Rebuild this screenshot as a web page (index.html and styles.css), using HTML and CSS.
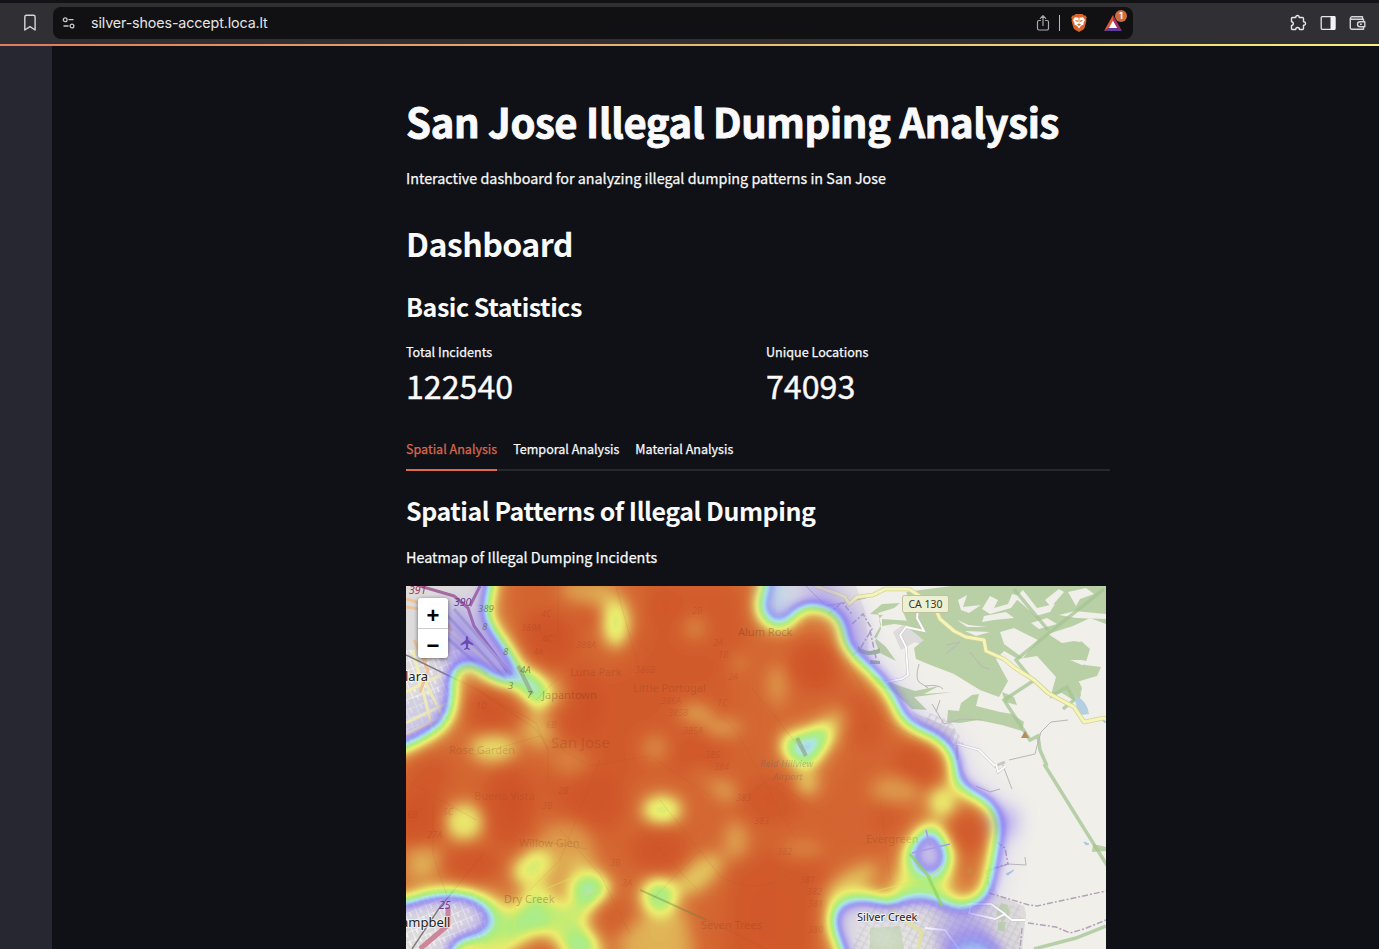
FILE: index.html
```html
<!DOCTYPE html>
<html lang="en">
<head>
<meta charset="utf-8">
<title>San Jose Illegal Dumping Analysis</title>
<link rel="stylesheet" href="styles.css">
</head>
<body>
<header class="toolbar">
  <svg class="bookmark" width="14" height="18" viewBox="0 0 14 18" fill="none" stroke="#d6d5d8" stroke-width="1.4" stroke-linejoin="round"><path d="M1.8 3a1.7 1.7 0 0 1 1.7-1.7h6.9A1.7 1.7 0 0 1 12.100 3v13L7 12.600 1.800 16z"/></svg>
  <div class="address">
    <svg width="14" height="14" viewBox="0 0 14 14" fill="none" stroke="#c9c8cb" stroke-width="1.3"><circle cx="3.200" cy="3.700" r="1.900"/><path d="M6.500 3.700h5M1.500 10h5"/><circle cx="10" cy="10" r="1.900"/></svg>
    <span class="url">silver-shoes-accept.loca.lt</span>
    <svg class="share" width="14" height="18" viewBox="0 0 14 18" fill="none" stroke="#a9a8ab" stroke-width="1.200" stroke-linecap="round" stroke-linejoin="round"><path d="M4.500 6.500H3A1.500 1.500 0 0 0 1.500 8v6.500A1.500 1.500 0 0 0 3 16h8a1.500 1.500 0 0 0 1.500-1.500V8A1.500 1.500 0 0 0 11 6.500H9.500M7 11.500V1.800M4.300 4.300 7 1.600l2.700 2.700"/></svg>
    <i class="divider"></i>
    <svg class="lion" width="16" height="18" viewBox="0 0 16 18"><path d="M4.500 0h7l1.500 1.600 1.500-.1 1.300 2-.7 1.700.4 1.400-1.800 7Q13.200 15 12 15.800L8 18l-4-2.200Q2.800 15 2.300 13.600L.5 6.600l.4-1.400-.7-1.700 1.300-2 1.500.1z" fill="#d9652b"/><path d="M4 3.200 8 3.800l4-.6 2 2.800-1.500 3 .1 1.500-2.600 1.300L8 14.600l-2-2.800-2.600-1.300.1-1.500L2 6z" fill="#fff"/><path d="m3.800 6 3.200.6-.6 1.700zM12.200 6 9 6.600l.6 1.700zM6 10.200 8 9.500l2 .7-2 1.800z" fill="#d9652b"/><path d="M8 3.500v5" stroke="#d9652b" stroke-width=".8"/></svg>
    <span class="rewards">
      <svg width="18" height="16" viewBox="0 0 18 16"><path d="M9 0 0 16l5-3 4-7z" fill="#e0592f"/><path d="M9 0v6l4 7 5 3z" fill="#a0306b"/><path d="M0 16h18l-5-3.200H5z" fill="#623a99"/><path d="M9 5.500 4.800 13h8.400z" fill="#fff"/></svg>
      <b class="badge">1</b>
    </span>
  </div>
  <div class="actions">
    <svg width="18" height="18" viewBox="0 0 18 18" fill="none" stroke="#e6e5e8" stroke-width="1.400" stroke-linejoin="round"><path d="M3.500 3.500h3.300C6.500.8 10.500.8 10.200 3.500h3.300a1 1 0 0 1 1 1v3.200c2.700-.2 2.700 3.800 0 3.600v3.200a1 1 0 0 1-1 1h-3c0-2.600-3.800-2.600-3.800 0H3.500a1 1 0 0 1-1-1v-3c2.400 0 2.400-3.800 0-3.800V4.500a1 1 0 0 1 1-1z"/></svg>
    <svg width="16" height="16" viewBox="0 0 16 16"><rect x="1.200" y="1.700" width="13.600" height="12.600" rx="1" fill="none" stroke="#e6e5e8" stroke-width="1.300"/><path d="M10.500 1h4a1 1 0 0 1 1 1v12a1 1 0 0 1-1 1h-4z" fill="#f2f1f4"/></svg>
    <svg width="17" height="16" viewBox="0 0 17 16" fill="none" stroke="#d6d5d8" stroke-width="1.400" stroke-linejoin="round"><path d="M13.500 4.300V1.800H2.500a1.300 1.300 0 0 0 0 2.500h12v2.400M1.300 3v9.800a1.500 1.500 0 0 0 1.500 1.500h11.700v-2.600M15.800 6.700H11a2.500 2.500 0 0 0 0 5h4.800zM11 9.200h1.800"/></svg>
  </div>
</header>
<div class="accent"></div>
<div class="page">
  <aside class="sidebar"></aside>
  <main class="content">
    <h1>San Jose Illegal Dumping Analysis</h1>
    <p class="intro">Interactive dashboard for analyzing illegal dumping patterns in San Jose</p>
    <h2>Dashboard</h2>
    <h3>Basic Statistics</h3>
    <section class="metrics">
      <div><div class="label">Total Incidents</div><div class="value">122540</div></div>
      <div><div class="label">Unique Locations</div><div class="value">74093</div></div>
    </section>
    <nav class="tabs"><a class="active">Spatial Analysis</a><a>Temporal Analysis</a><a>Material Analysis</a></nav>
    <h3 class="patterns">Spatial Patterns of Illegal Dumping</h3>
    <p class="caption">Heatmap of Illegal Dumping Incidents</p>
    <div class="map">
      <svg class="canvas" width="700" height="363" viewBox="406 586 700 363">
        <defs>
          <filter id="heat" filterUnits="userSpaceOnUse" x="340" y="520" width="830" height="500" color-interpolation-filters="sRGB">
            <feGaussianBlur in="SourceGraphic" stdDeviation="8" result="fine"/>
            <feGaussianBlur in="SourceGraphic" stdDeviation="17" result="wide"/>
            <feComposite in="fine" in2="wide" operator="arithmetic" k1="0" k2=".66" k3=".34" k4="0"/>
            <feColorMatrix values="1 0 0 0 0  1 0 0 0 0  1 0 0 0 0  1 0 0 0 0"/>
            <feComponentTransfer>
              <feFuncR type="table" tableValues=".53 .53 .52 .50 .47 .55 .62 .62 .67 .80 .93 .91 .885 .865 .85 .835 .82 .81"/>
              <feFuncG type="table" tableValues=".44 .44 .44 .42 .50 .75 .91 .94 .94 .94 .93 .83 .70 .58 .48 .40 .34 .31"/>
              <feFuncB type="table" tableValues=".97 .97 .96 .96 .97 .98 .88 .50 .42 .38 .38 .35 .30 .25 .21 .17 .145 .13"/>
              <feFuncA type="table" tableValues="0 .12 .34 .58 .68 .73 .77 .82 .85 .87 .89 .91 .92 .93 .94 .95 .96 .97"/>
            </feComponentTransfer>
          </filter>
          <filter id="soft" x="-50%" y="-50%" width="200%" height="200%"><feGaussianBlur stdDeviation="10"/></filter>
          <pattern id="streets" width="11" height="9" patternUnits="userSpaceOnUse" patternTransform="rotate(-22)"><path d="M0 0h11M0 0v9M5 0v5" stroke="#fff" stroke-width="1.200" fill="none"/></pattern>
          <pattern id="lanes" width="7" height="6" patternUnits="userSpaceOnUse" patternTransform="rotate(28)"><path d="M0 1h6M2 1v5" stroke="#c4c3c3" stroke-width=".8" fill="none"/></pattern>
        </defs>
        <rect x="406" y="586" width="700" height="363" fill="#f0efea"/>
        <!-- built-up areas -->
        <g fill="#dddbdb">
          <path d="M406 586h370v363H406z"/>
          <path d="M776 586h80l10 28 4 60 30 40 30 16 30 34 10 20 20 90 10 26-6 49H776z" opacity=".7"/>
          <path d="M893 632l14-10 20-4 8 8-6 22-14-6-14 8zM950 640l22 6 14 20-10 2-30-22zM912 712l20 8 24 10-4 14-24-8z"/>
          <path d="M960 896h40l24 10 2 8-4 35h-84l-10-35z"/>
        </g>
        <path d="M406 650h60v100h-60zM406 890h80v59h-80z" fill="url(#streets)"/>
        <path d="M870 904l54-4 96 6v43H850z" fill="url(#lanes)"/>
        <path d="M926 712l24 8 14 24-20 4-20-20z" fill="url(#lanes)"/>
        <path d="M406 700l34-8 14 20-30 26h-18z" fill="#c5c2e6" opacity=".4"/>
        <!-- parks and hills -->
        <g fill="#b9cfa5">
          <path d="M951 586h155v38l-16-6-17 8-25 8 14 9 18-3 10 9-5 16 16 2-4 9-24 7 8 12-3 8-16-10-11 2 5-18-19-21-19 3-14-8-8 8 12 22-9 16-19-7-26-16-26-10-12-5-2-11 10-8-13-10-8-18 9-8-6-12z"/>
          <path d="M870 614l12-10 18-1-6 5-16 5 3 12-7 12 12 10 10 14-16-8-11 1 2-3 8 0-4-10 6-12-2-10 4-4zM882 619l30 2 6 6-24-3-12 2zM921 634l25 2-5 5-20-2zM870 674l30 12 15 5 24-5-15 8 29-2-39 5 13 13-15-1-17-16-23-11zM948 710l11 1 2-8 11-8 7-1-3 12 24 6 12 2 12 8-2 9-20-6-24-5-18 3-13-1z"/>
          <path d="M1005 702l12 3-3-8-12-5z"/>
          <path d="M1050 650l14 0 14 10-4 12 8 16-2 8-16-12-6-14z"/>
          <path d="M870 928l30-2 4 23h-34zM1001 903l7 2 2 10-8 6-6-7zM998 922l8 0-2 10-6-2z" opacity=".8"/>
          <path d="M1093 844l13 3v4l-14 1z"/>
        </g>
        <g fill="#f0efea">
          <path d="M958 600l9-5-4 12 18-2-12 8-8-3zM984 616l22-4 8 6-20 2-12 2zM1000 632l14-4 24 12-15 18-19-14zM1015 598l8-8 14 18 18-4-5 8-14 4zM1031 623l16-5 10 6-18 5zM965 631l25 1-14 4zM1068 592l18-4 8 6-14 5-4 7zM1059 615l16-4 31 3v5l-30-1z"/>
          <path d="M957 620l12 5 18 2-20 0zM990 596l8 4-4 8 14-4 4-10 8 2-9 12-21 6-8-5zM1045 600l14-11 5 3-13 15zM1066 640l14 2 9-5-11-2zM1070 660l12 5 14-2-14-3z"/>
        </g>
        <g fill="none" stroke="#a4c493" stroke-opacity=".75" stroke-width="3.500">
          <path d="M1104 589l-55 44-33 27 17 21-29 19 26 40 8-4 2 14 7 16M1014 589l34 41M1044 764l64 103M1106 926l-30 12-42 11M1050 697l17-10 7 13-11 9"/>
        </g>
        <path d="M1075 696q12 4 14 18l-8 1q-6-8-6-19z" fill="#b4cfdf"/>
        <path d="M1006 874l8-4-6 5zM1084 842l5 2-3 1zM1102 720h4l-1 3z" fill="#a9c8dd" stroke="#a9c8dd"/>
        <!-- roads -->
        <g fill="none" stroke="#b9b7b5" stroke-width="1">
          <path d="M919 664q-4 14 0 18l9 6M925 686q14-2 18 3M946 645l14-3-14 12M970 652l12 15 8 2M932 704l12 20 18-5 20 1M940 700l-4 12M1068 720l-17 2-10 10-4 14-2 8-26 6M1002 763l10 26M984 873l24-9 18 1-1-8"/>
          <path d="M806 586l20 20 40-8M976 786l14 6 10-3"/>
        </g>
        <g fill="none" stroke="#c9c6c6" stroke-width="2.800">
          <path d="M918 608l-1 10 7 13-18-4-6 8 6 12 2 28-6 4-16 3M957 760v-16l22 6 16 16 10-4M996 764l2 8 8-6"/>
          <path d="M967 904l24 0 14 10-10 5-26-6 2-9M1004 914l8 6h13"/>
        </g>
        <g fill="none" stroke="#fff" stroke-width="1.800">
          <path d="M918 608l-1 10 7 13-18-4-6 8 6 12 2 28-6 4-16 3M957 744l22 6 16 16M996 764l2 8 8-6"/>
          <path d="M967 904l24 0 14 10-10 5-26-6 2-9M1004 914l8 6h13M925 928l20 2 14 19"/>
        </g>
        <g fill="none" stroke-linejoin="round">
          <path d="M815 586l20 7 10 4 4 7 8-7 16-2 12-6 24 0 12 8 12 6 7 16 14 12 12 6 18 3 2 11 18 8 11 9 19 12 14 13 26 14 10 15 20-4 22 11" stroke="#d4d39a" stroke-width="4.500"/>
          <path d="M815 586l20 7 10 4 4 7 8-7 16-2 12-6 24 0 12 8 12 6 7 16 14 12 12 6 18 3 2 11 18 8 11 9 19 12 14 13 26 14 10 15 20-4 22 11" stroke="#f6f5b8" stroke-width="3"/>
          <path d="M885 900l12 15 25 17-4 17" stroke="#e3e2a6" stroke-width="4"/>
          <path d="M406 723l50-24M406 734l46-22M413 650l22 90M424 680l26 50M406 692l36-18M440 622l66 55" stroke="#f2efb5" stroke-width="3"/>
          <path d="M406 599l30 8 16 24M414 640l14 30-8 22M406 607l14 2 6 60" stroke="#efc49c" stroke-width="3"/>
          <path d="M406 655l70 34 60 40 12 20M412 949l28-42 10-12 34-42" stroke="#827f7c" stroke-width="1.500"/>
          <path d="M420 586l34 10 14 12 6 18 34 46M480 586l-10 20" stroke="#a66b9c" stroke-width="3"/>
          <path d="M446 614l60 65M454 609l58 66M438 630l50 44" stroke="#b9b8bf" stroke-width="3"/>
          <path d="M448 907v18l-28 24" stroke="#cf8797" stroke-width="5"/>
        </g>
        <g fill="none" stroke="#b3a3ba" stroke-width="1.500" stroke-dasharray="6 2 2 2">
          <path d="M989 893l40 12 8 1 69-15M1028 923l28 4 14 6 14-4 22-9M1022 928l-2 21M997 842l8 6 3 16-22 6 4 22M828 615l14-13 10 12M852 624l11-10 9 15-12 20-12 10M870 630l6 28"/>
        </g>
        <path d="M858 646q10 9 22 2v5q-14 5-22-2zM870 660l10 1v3h-10z" fill="#9fb894"/>
        <!-- incident density -->
        <g filter="url(#heat)">
          <rect x="240" y="420" width="1000" height="700" fill="#000"/>
          <path fill="#e8e8e8" stroke="#000" stroke-width="5" d="M496 520L490 586 484 613 492 630 505 647 518 668 510 684 489 676 479 664 466 660 456 664 450 677 452 697 449 713 441 726 421 738 400 748 300 780V903H406L426 896 449 893 473 896 487 909 491 924 480 934 458 941 450 949V1060H850L845 955 834 929 832 914 842 903 867 898 890 905 907 900 927 899 947 906 970 906 987 896 992 873 997 844 1001 821 990 802 970 792 956 780 956 764 952 750 939 737 915 727 902 717 896 701 886 685 872 670 855 655 845 641 845 623 833 609 810 603 795 610 787 624 773 625 764 617 760 603 768 590V520z"/>
          <g fill="#fff">
            <circle cx="547" cy="640" r="27"/><circle cx="590" cy="615" r="12"/><circle cx="492" cy="708" r="25"/><ellipse cx="580" cy="705" rx="24" ry="38"/><path d="M650 590h100l-8 60-20 30 20 50-30 60-60-20-40 20-36 40-40-50 40-20 30-80 30-20z" opacity=".48"/>
            <circle cx="815" cy="665" r="24"/><circle cx="663" cy="603" r="18" opacity=".5"/><circle cx="660" cy="850" r="25"/><circle cx="920" cy="765" r="24"/><circle cx="968" cy="832" r="20"/><ellipse cx="508" cy="805" rx="24" ry="40"/><circle cx="420" cy="820" r="28"/><ellipse cx="470" cy="865" rx="28" ry="16"/><circle cx="595" cy="800" r="30" opacity=".8"/><ellipse cx="770" cy="800" rx="34" ry="22" opacity=".7"/><path d="M730 870l60-30 40 30-20 90h-80z" opacity=".6"/><circle cx="860" cy="720" r="26" opacity=".6"/><ellipse cx="700" cy="752" rx="28" ry="14" opacity=".6"/><circle cx="890" cy="815" r="18" opacity=".6"/><circle cx="612" cy="917" r="17" opacity=".6"/><circle cx="428" cy="774" r="20" opacity=".7"/><circle cx="628" cy="640" r="14" opacity=".4"/>
          </g>
          <g fill="#808080">
            <ellipse cx="616" cy="624" rx="13" ry="24" fill="#707070"/><path d="M560 580h50l16 20-30 8-34-10z" opacity=".5"/>
            <path d="M516 669l20 4 14 18-8 19-24-20z" fill="#282828"/><ellipse cx="558" cy="692" rx="12" ry="17" opacity=".4"/>
            <path d="M536 706l20 26-14 21-24-20z" opacity=".6"/><ellipse cx="493" cy="748" rx="24" ry="15" opacity=".85"/><ellipse cx="464" cy="822" rx="20" ry="19" opacity=".95"/><path d="M406 846l26-2 12 14-12 20h-26z" opacity=".55"/>
            <ellipse cx="662" cy="810" rx="20" ry="14" fill="#6c6c6c"/><ellipse cx="700" cy="874" rx="28" ry="14" transform="rotate(-40 700 874)" opacity=".7"/><ellipse cx="736" cy="840" rx="12" ry="20" opacity=".5"/><ellipse cx="724" cy="790" rx="18" ry="10" transform="rotate(30 724 790)" opacity=".5"/>
            <ellipse cx="695" cy="713" rx="18" ry="11" opacity=".55"/><ellipse cx="723" cy="728" rx="20" ry="11" opacity=".5"/><circle cx="655" cy="748" r="15" opacity=".4"/><circle cx="695" cy="628" r="13" opacity=".4"/><ellipse cx="777" cy="685" rx="10" ry="22" opacity=".45"/><circle cx="738" cy="662" r="10" opacity=".3"/>
            <path d="M806 732l30-26 14 6-12 34z" opacity=".55"/><ellipse cx="800" cy="850" rx="22" ry="10" opacity=".35"/><ellipse cx="850" cy="883" rx="34" ry="12" transform="rotate(-35 850 883)" opacity=".6"/><ellipse cx="896" cy="790" rx="26" ry="15" opacity=".45"/><ellipse cx="942" cy="802" rx="14" ry="16"/><path d="M540 826l40-8 14 20 0 30-20 4-30-20z" opacity=".38"/>
            <circle cx="807" cy="784" r="12" opacity=".8"/><ellipse cx="572" cy="762" rx="20" ry="16" opacity=".3"/><circle cx="700" cy="774" r="10" opacity=".25"/>
          </g>
          <g fill="#000">
            <path d="M446 610l22-10 46 66-6 12-18-6-12-12-20-4z"/>
            <path d="M784 736l30-6 16-6-4 24-15 19-16-2-13-15z" opacity=".78"/>
            <path d="M510 868l26-22 18 14-10 14-24 12z" opacity=".5"/>
            <path d="M570 882l22-10 20 13-10 15-24 4z" opacity=".68"/>
            <path d="M522 894l16-16 12 24 22 4 18-12 6 8-12 22 18 21v20h-34l-14-28-20-4-16 6-4-4z" opacity=".44"/><circle cx="537" cy="918" r="13" opacity=".3"/><circle cx="580" cy="945" r="14" opacity=".42"/>
            <circle cx="659" cy="896" r="18" opacity=".64"/>
            <path d="M906 856l16-28 16 0 14 26-4 18-24 5z"/>
            <path d="M892 888l16-46 24-20 14 36 8 14-2 30h-54z" opacity=".36"/>
            <path d="M486 888l16 18 20 14-12 50h-40z" opacity=".36"/>
            <path d="M500 900l26 4 6 20v50h-30z" opacity=".2"/>
            <path d="M616 938l20-20 50-8 8 36v30h-70z" opacity=".22"/>
            <path d="M540 866l50-10 20 30-30 30-40-10z" opacity=".12"/>
          </g>
          <path d="M946 892q-8-14 6-38l24 2-6 32-10 8z" fill="#eee" opacity=".4"/>
          <ellipse cx="530" cy="966" rx="30" ry="20" fill="#fff" opacity=".7"/>
          <ellipse cx="974" cy="956" rx="28" ry="20" fill="#6c6c6c"/>
          <path d="M930 925l34-14 26 8 8 40h-60z" fill="#383838" opacity=".6"/>
        </g>
        <g filter="url(#soft)" fill="#7e69f2" opacity=".55"><circle cx="1004" cy="822" r="13"/><path d="M440 606l20 0 56 74-36-18-36-2zM790 580h34l30 30 14 40-14-4-14-36z"/></g>
        <path d="M762 570h26l-2 40-10 10-12-12z" fill="#a3d9ef" filter="url(#soft)" opacity=".5"/>
        <path d="M862 926l28-4 22 28h-40z" fill="#ece9ee" filter="url(#soft)" opacity=".5"/>
        <!-- roads showing through the density layer -->
        <g fill="none" stroke="#9c5a22" stroke-opacity=".14" stroke-width="1">
          <path d="M558 586v60M616 586l22 80M476 689l60 34 12 26v34M536 700l24-24M406 780l70 40M433 805v50l14 41M527 839l60 10M560 830l40 44 30 60M640 830l58 60M660 800l60 76q40 24 80-10M640 889l66 30 60 30M741 800l30-22 60 44M752 688l48 60M700 850l-48 50"/>
          <path d="M470 756l70-20 50 30 60-10 60 40M636 640l100 90 60 110M600 760l-40 100-30 30M846 660l34 60 40 20M880 800l10 80" stroke-opacity=".1"/>
        </g>
        <g fill="none" stroke="#dce95a" stroke-opacity=".5" stroke-width="1.300"><path d="M515 942l32-15 36-14M541 900l28 49M538 870v22l55-23M583 896l24-12M872 892l56-14 14-12M515 942v-34"/></g>
        <path d="M928 876l14 30M910 854l20 24" fill="none" stroke="#8fd25c" stroke-opacity=".7" stroke-width="3"/>
        <path d="M912 853l38-9M926 830l4 16" fill="none" stroke="#a79aea" stroke-width="1.500"/>
        <path d="M518 666l14 28M797 738l9 18" stroke="#89986e" stroke-width="4" stroke-opacity=".55"/>
        <path d="M640 890l66 30" stroke="#69803f" stroke-opacity=".4" stroke-width="1.500"/>
        <path d="M1021 738l4-7 4 7z" fill="#b98a5b"/>
        <path d="M966 873l4-7 4 7z" fill="#c88a42" opacity=".6"/>
        <path d="M467 636c1 0 1.300 2 1.300 4l5 4v1.500l-5-2-.4 4 2 1.500v1l-2.900-1-2.900 1v-1l2-1.500-.4-4-5 2V644l5-4c0-2 .3-4 1.300-4z" fill="#684bb8"/>
        <g class="dense-labels">
          <text x="738" y="636" class="alum">Alum Rock</text><text x="570" y="676">Luna Park</text><text x="542" y="699" class="alum">Japantown</text><text x="633" y="692">Little Portugal</text>
          <text x="449" y="754">Rose Garden</text><text x="474" y="800" class="faint">Buena Vista</text><text x="519" y="847">Willow Glen</text><text x="504" y="903" class="alum">Dry Creek</text><text x="701" y="929">Seven Trees</text><text x="866" y="843">Evergreen</text>
          <text x="551" y="748" class="city">San Jose</text>
        </g>
        <g class="airport"><text x="760" y="767">Reid-Hillview</text><text x="773" y="780">Airport</text></g>
        <g class="routes">
          <text x="478" y="612" class="near">389</text><text x="482" y="630" class="near">8</text><text x="503" y="655" class="near">8</text><text x="520" y="673" class="near">4A</text><text x="508" y="689" class="near">3</text><text x="527" y="698" class="near">7</text>
          <text x="521" y="631">389A</text><text x="541" y="617">4C</text><text x="542" y="642">4C</text><text x="533" y="655">4A</text><text x="576" y="648">388A</text><text x="692" y="614">2B</text><text x="713" y="646">2A</text><text x="718" y="658">1B</text><text x="728" y="680">2A</text><text x="635" y="673">386B</text><text x="661" y="704">386A</text><text x="668" y="716">385B</text><text x="717" y="706">1C</text><text x="683" y="734">385A</text><text x="705" y="758">385</text><text x="546" y="728">6B</text><text x="476" y="709">1D</text><text x="443" y="815">5C</text><text x="427" y="838">27A</text><text x="407" y="818">6B</text><text x="542" y="809">3B</text><text x="558" y="794">2B</text><text x="610" y="866">3B</text><text x="622" y="886">3A</text><text x="736" y="801">383</text><text x="754" y="824">383</text><text x="777" y="855">382</text><text x="800" y="883">381</text><text x="807" y="895">382</text><text x="808" y="907">381</text><text x="808" y="933">380</text><text x="714" y="770">384</text>
        </g>
        <g class="highway"><text x="409" y="594" fill="#a23357">391</text><text x="454" y="606" fill="#6e3c94">390</text><text x="439" y="909" fill="#7b3595">25</text></g>
        <g class="places"><text x="405" y="681" class="big">lara</text><text x="401" y="926.500" class="big">ampbell</text><text x="857" y="921">Silver Creek</text></g>
        <rect x="902.500" y="595.500" width="46" height="17" rx="2" fill="#eef0d3" stroke="#bfc29c"/>
        <text x="925.500" y="608" class="shield">CA 130</text>
      </svg>
      <div class="zoom"><span>+</span><span>−</span></div>
    </div>
  </main>
</div>
</body>
</html>
```
FILE: styles.css
```css
* { box-sizing: border-box; }
body { margin: 0; height: 949px; overflow: hidden; background: #0f1116; color: #fafafa; font-family: "Noto Sans CJK SC", sans-serif; -webkit-text-stroke: .25px currentColor; }
h1, h2, h3, p { margin: 0; white-space: nowrap; }
svg { flex: none; display: block; -webkit-text-stroke: 0; }

.toolbar { height: 44px; border-top: 3px solid #131315; background: #302f34; display: flex; align-items: center; padding: 0 13px 1px 23px; -webkit-text-stroke: 0; }
.address { width: 1080px; height: 32px; margin-left: 16px; padding: 0 9px; border-radius: 8px; background: #111113; display: flex; align-items: center; }
.url { margin-left: 15px; font: 14.3px/20px Inter, sans-serif; letter-spacing: -.13px; color: #e4e4e6; flex: 1; }
.divider { width: 1px; height: 16px; margin: 0 11px 0 9px; background: #b9b8bb; }
.rewards { position: relative; margin-left: 17px; margin-right: 2px; }
.badge { position: absolute; left: 11px; top: -5px; width: 12px; height: 12px; border-radius: 6px; background: #cf6b40; color: #fff; font: 700 9px/12px Inter, sans-serif; text-align: center; }
.actions { margin-left: auto; display: flex; align-items: center; gap: 13px; }
.accent { height: 2px; background: linear-gradient(90deg, #e07b5c, #eab873 50%, #f5ef80); }

.page { display: flex; height: 903px; }
.sidebar { width: 52px; flex: none; background: #262730; }
.content { width: 1058px; padding: 44px 0 0 354px; flex: none; }

h1 { height: 62px; font-size: 40px; line-height: 62px; font-weight: 700; letter-spacing: -.33px; -webkit-text-stroke: .9px currentColor; }
.intro { height: 24px; margin-top: 14px; font-size: 14.35px; line-height: 24px; }
h2 { height: 44px; margin-top: 31px; font-size: 32.2px; line-height: 44px; font-weight: 700; letter-spacing: -.6px; -webkit-text-stroke: 0; }
h3 { height: 34px; margin-top: 24px; font-size: 25px; line-height: 34px; font-weight: 700; letter-spacing: -.46px; -webkit-text-stroke: 0; }
.metrics { display: grid; grid-template-columns: 1fr 1fr; gap: 16px; margin-top: 18px; }
.label { font-size: 12.6px; line-height: 22px; }
.value { font-size: 32.2px; line-height: 46px; margin-top: -1px; -webkit-text-stroke: .4px currentColor; }
.tabs { height: 41px; margin-top: 22px; border-bottom: 2px solid #262730; display: flex; gap: 16px; font-size: 12.55px; line-height: 38px; }
.tabs a { height: 41px; }
.tabs .active { color: #d8694f; border-bottom: 2px solid #e0694f; }
.patterns { margin-top: 22px; }
.caption { height: 24px; margin-top: 18px; font-size: 14.35px; line-height: 24px; }

.map { position: relative; width: 700px; height: 363px; margin-top: 17px; overflow: hidden; font-family: "Noto Sans", sans-serif; -webkit-text-stroke: 0; }
.zoom { position: absolute; left: 12px; top: 12px; width: 30px; border-radius: 3px; background: #fff; box-shadow: 0 1px 4px rgba(0,0,0,.55); color: #000; font: 700 22px/35px "Liberation Sans", sans-serif; text-align: center; }
.zoom span { display: block; height: 30px; }
.zoom span + span { border-top: 1px solid #ccc; line-height: 33px; }
.dense-labels { font-size: 11px; fill: #6f3515; fill-opacity: .22; }
.dense-labels .alum { fill-opacity: .36; }
.dense-labels .faint { fill-opacity: .16; }
.dense-labels .city { font-size: 15px; }
.airport { font-size: 9.500px; font-style: italic; fill: #4c6573; fill-opacity: .35; }
.routes { font-size: 9px; font-style: italic; fill: #892b1c; fill-opacity: .2; }
.routes .near { font-size: 9.500px; fill: #51653f; fill-opacity: .65; }
.highway { font-size: 10.500px; font-style: italic; }
.places { font-size: 11px; fill: #1b1d30; paint-order: stroke; stroke: #fff; stroke-opacity: .6; stroke-width: 2px; }
.places .big { font-size: 13px; fill: #222; }
.shield { font-size: 10.500px; fill: #33372b; text-anchor: middle; }
```
